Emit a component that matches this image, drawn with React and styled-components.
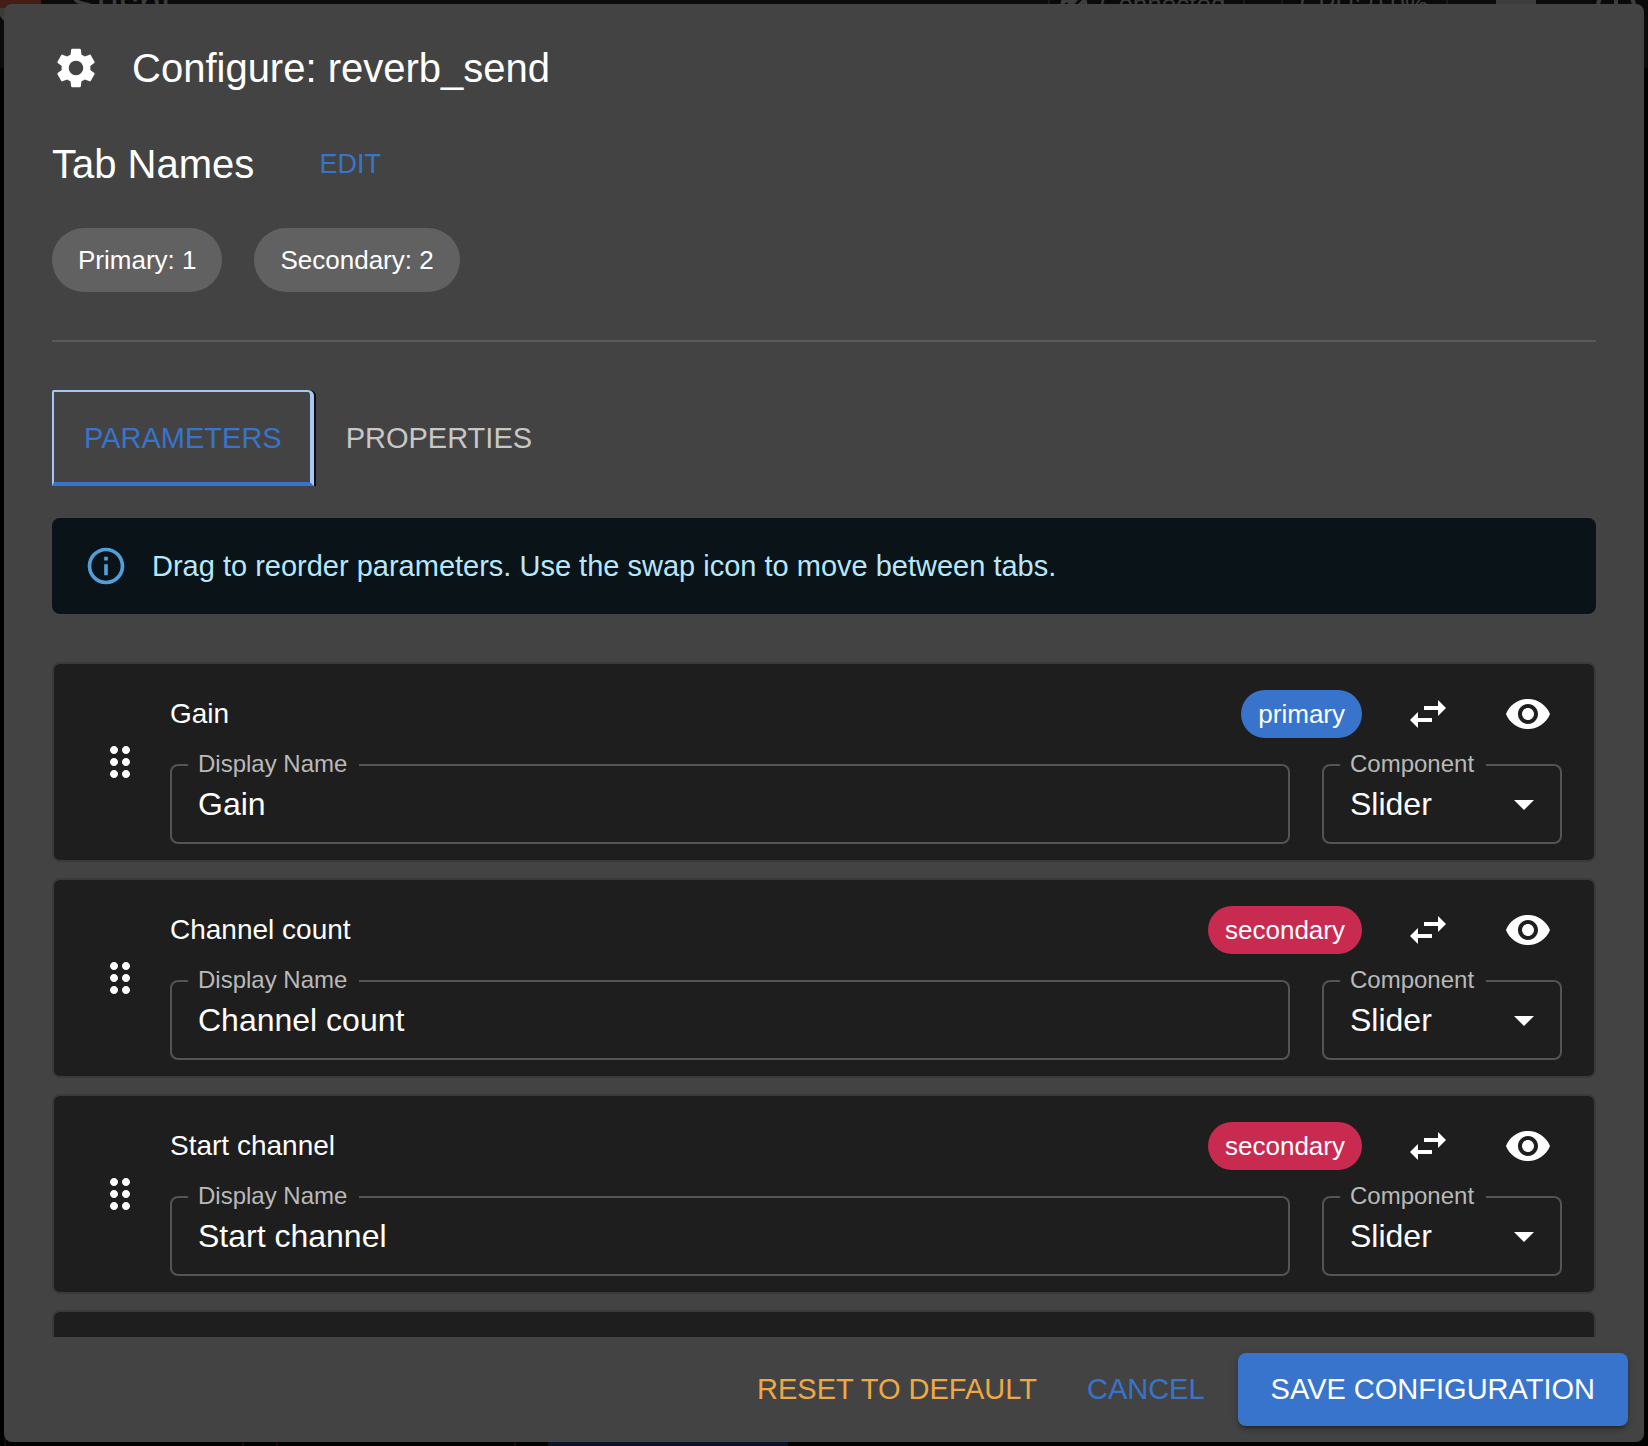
import React, { useId, useState } from "react";
import styled, { createGlobalStyle } from "styled-components";

const GlobalStyle = createGlobalStyle`
  *, *::before, *::after { box-sizing: border-box; }
  html, body, #root { height: 100%; }
  body {
    margin: 0;
    overflow: hidden;
    background: #000;
    color: #fff;
    font-family: "Liberation Sans", Helvetica, Arial, sans-serif;
  }
  button, input, select { font: inherit; color: inherit; }
`;

const Page = styled.div`
  position: relative;
  height: 100vh;
  overflow: hidden;
`;

const Backdrop = styled.div`
  position: absolute;
  inset: 0;
  display: flex;
  flex-direction: column;
  justify-content: space-between;
  color: #3d3d3d;
`;

const AppBar = styled.header`
  display: flex;
  align-items: center;
  gap: 36px;
  height: 128px;
  margin-top: -60px;
  background: #0a0a0a;
`;

const Brand = styled.span`
  flex: 1;
  display: flex;
  align-items: center;
  gap: 28px;
  font-size: 40px;
  line-height: 40px;
`;

const Logo = styled.svg`
  width: 42px;
  height: 40px;
`;

const Status = styled.span`
  display: flex;
  align-items: center;
  gap: 10px;
  height: 64px;
  padding: 0 18px 0 ${(p) => (p.$icon ? 8 : 16)}px;
  border: 2px solid #1b1b1b;
  border-radius: 32px;
  font-size: 26px;
`;

const BarIcon = styled.svg`
  width: 64px;
  height: 48px;
  fill: currentColor;
`;

const Tracks = styled.div`
  display: flex;
  height: 8px;
`;

const Track = styled.div`
  width: ${(p) => p.$width}px;
  background: ${(p) => p.$fill || "#000"};
  border-left: 2px solid ${(p) => p.$fill || "#1d0709"};
`;

const Overlay = styled.div`
  position: absolute;
  inset: 0;
  display: flex;
  padding: 4px;
`;

const Dialog = styled.section`
  flex: 1;
  min-width: 0;
  display: flex;
  flex-direction: column;
  border-radius: 8px;
  background: #434343;
`;

const DialogTitle = styled.h2`
  display: flex;
  align-items: center;
  gap: 32px;
  margin: 0;
  padding: 32px 48px;
  font-size: 40px;
  line-height: 64px;
  font-weight: 400;
`;

const Icon = styled.svg`
  display: block;
  flex: none;
  width: ${(p) => p.$size || 48}px;
  height: ${(p) => p.$size || 48}px;
  fill: currentColor;
`;

const Content = styled.div`
  flex: 1;
  min-height: 0;
  padding: 0 48px;
  overflow: hidden;
`;

const SectionHead = styled.div`
  display: flex;
  align-items: center;
  gap: 32px;
  height: 64px;
`;

const SectionTitle = styled.h3`
  margin: 0;
  font-size: 40px;
  line-height: 64px;
  font-weight: 400;
`;

const Button = styled.button`
  border: 0;
  border-radius: 8px;
  padding: 12px ${(p) => (p.$solid ? 33 : 17)}px;
  background: ${(p) => (p.$solid ? "#3874cb" : "transparent")};
  box-shadow: ${(p) =>
    p.$solid ? "0 6px 2px -4px rgba(0,0,0,.2), 0 4px 4px rgba(0,0,0,.14), 0 2px 10px rgba(0,0,0,.12)" : "none"};
  color: ${(p) => p.$color || "#fff"};
  font-size: 29px;
  line-height: 49px;
  text-transform: uppercase;
  white-space: nowrap;
  cursor: pointer;
`;

const SmallButton = styled(Button)`
  min-width: 128px;
  padding: 8px 10px;
  font-size: 27px;
  line-height: 44px;
`;

const ChipRow = styled.div`
  display: flex;
  gap: 32px;
  padding: 32px 0 48px;
  border-bottom: 2px solid #595959;
`;

const Chip = styled.span`
  display: inline-flex;
  align-items: center;
  height: ${(p) => (p.$tone ? 48 : 64)}px;
  padding: 0 ${(p) => (p.$tone ? 17 : 26)}px;
  border-radius: 32px;
  background: ${(p) => p.$tone || "#616161"};
  font-size: 26px;
  white-space: nowrap;
`;

const Tabs = styled.div`
  display: flex;
  margin: 48px 0 32px;
`;

const Tab = styled.button`
  height: 96px;
  padding: ${(p) => (p.$active ? "2px 28px 0 30px" : "0 32px")};
  border: 0 solid #a5c6f8;
  border-width: ${(p) => (p.$active ? "2px 4px 4px 2px" : "0")};
  border-bottom-color: #3874cb;
  border-radius: 2px 6px 0 0;
  background: transparent;
  box-shadow: ${(p) => (p.$active ? "2px 0 0 #0c0c0c" : "none")};
  color: ${(p) => (p.$active ? "#3874cb" : "#c7c7c7")};
  font-size: 29px;
  text-transform: uppercase;
  outline: none;
  cursor: pointer;
`;

const Alert = styled.div`
  display: flex;
  align-items: center;
  gap: 24px;
  min-height: 96px;
  margin-bottom: 48px;
  padding: 0 32px;
  border-radius: 8px;
  background: #0a1318;
  color: #b8e7fb;
  font-size: 29px;
  line-height: 40px;
  svg { color: #509fd9; }
`;

const List = styled.ul`
  display: flex;
  flex-direction: column;
  gap: 16px;
  margin: 0;
  padding: 0;
  list-style: none;
`;

const Card = styled.li`
  display: flex;
  align-items: center;
  gap: 16px;
  padding: 16px 32px;
  border: 2px solid #393939;
  border-radius: 8px;
  background: #1e1e1e;
`;

const CardBody = styled.div`
  flex: 1;
  min-width: 0;
  display: grid;
  gap: 16px;
`;

const CardRow = styled.div`
  display: flex;
  align-items: center;
  gap: 32px;
`;

const ParamName = styled.span`
  flex: 1;
  font-size: 28px;
`;

const IconButton = styled.button`
  flex: none;
  padding: 10px;
  border: 0;
  border-radius: 50%;
  background: transparent;
  cursor: pointer;
`;

const Field = styled.div`
  position: relative;
  flex: ${(p) => (p.$width ? "none" : 1)};
  width: ${(p) => (p.$width ? `${p.$width}px` : "auto")};
  min-width: 0;
`;

const FieldLabel = styled.label`
  position: absolute;
  top: -14px;
  left: 18px;
  padding: 0 12px 0 10px;
  background: #1e1e1e;
  color: #b9b9b9;
  font-size: 24px;
  line-height: 28px;
`;

const controlStyle = `
  display: block;
  width: 100%;
  height: 80px;
  padding: 0 26px;
  border: 2px solid #545454;
  border-radius: 8px;
  background: transparent;
  font-size: 32px;
  outline: none;
`;

const TextInput = styled.input`${controlStyle}`;

const Select = styled.select`
  ${controlStyle}
  appearance: none;
  option { background: #1e1e1e; }
`;

const SelectArrow = styled(Icon)`
  position: absolute;
  top: 16px;
  right: 14px;
  pointer-events: none;
`;

const Actions = styled.footer`
  display: flex;
  justify-content: flex-end;
  gap: 16px;
  padding: 16px;
`;

const paths = {
  gear: "M19.14 12.94c.04-.3.06-.61.06-.94 0-.32-.02-.64-.07-.94l2.03-1.58c.18-.14.23-.41.12-.61l-1.92-3.32c-.12-.22-.37-.29-.59-.22l-2.39.96c-.5-.38-1.03-.7-1.62-.94l-.36-2.54c-.04-.24-.24-.41-.48-.41h-3.84c-.24 0-.43.17-.47.41l-.36 2.54c-.59.24-1.13.57-1.62.94l-2.39-.96c-.22-.08-.47 0-.59.22L2.74 8.87c-.12.21-.08.47.12.61l2.03 1.58c-.05.3-.09.63-.09.94s.02.64.07.94l-2.03 1.58c-.18.14-.23.41-.12.61l1.92 3.32c.12.22.37.29.59.22l2.39-.96c.5.38 1.03.7 1.62.94l.36 2.54c.05.24.24.41.48.41h3.84c.24 0 .44-.17.47-.41l.36-2.54c.59-.24 1.13-.56 1.62-.94l2.39.96c.22.08.47 0 .59-.22l1.92-3.32c.12-.22.07-.47-.12-.61l-2.01-1.58zM12 15.6c-1.98 0-3.6-1.62-3.6-3.6s1.62-3.6 3.6-3.6 3.6 1.62 3.6 3.6-1.62 3.6-3.6 3.6z",
  info: "M11 7h2v2h-2zm0 4h2v6h-2zm1-9C6.48 2 2 6.48 2 12s4.48 10 10 10 10-4.48 10-10S17.52 2 12 2m0 18c-4.41 0-8-3.59-8-8s3.59-8 8-8 8 3.59 8 8-3.59 8-8 8",
  drag: "M11 18c0 1.1-.9 2-2 2s-2-.9-2-2 .9-2 2-2 2 .9 2 2m-2-8c-1.1 0-2 .9-2 2s.9 2 2 2 2-.9 2-2-.9-2-2-2m0-6c-1.1 0-2 .9-2 2s.9 2 2 2 2-.9 2-2-.9-2-2-2m6 4c1.1 0 2-.9 2-2s-.9-2-2-2-2 .9-2 2 .9 2 2 2m0 2c-1.1 0-2 .9-2 2s.9 2 2 2 2-.9 2-2-.9-2-2-2m0 6c-1.1 0-2 .9-2 2s.9 2 2 2 2-.9 2-2-.9-2-2-2",
  swap: "M6.99 11 3 15l3.99 4v-3H14v-2H6.99zM21 9l-3.99-4v3H10v2h7.01v3z",
  eye: "M12 4.5C7 4.5 2.73 7.61 1 12c1.73 4.39 6 7.5 11 7.5s9.27-3.11 11-7.5c-1.73-4.39-6-7.5-11-7.5M12 17c-2.76 0-5-2.24-5-5s2.24-5 5-5 5 2.24 5 5-2.24 5-5 5m0-8c-1.66 0-3 1.34-3 3s1.34 3 3 3 3-1.34 3-3-1.34-3-3-3",
  arrow: "m7 10 5 5 5-5z",
  check: "M12 2C6.48 2 2 6.48 2 12s4.48 10 10 10 10-4.48 10-10S17.52 2 12 2m-2 15-5-5 1.41-1.41L10 14.17l7.59-7.59L19 8z",
};

function Glyph({ name, size }) {
  return (
    <Icon viewBox="0 0 24 24" $size={size} aria-hidden="true">
      <path d={paths[name]} />
    </Icon>
  );
}

const toneOf = { primary: "#3874cb", secondary: "#c92a50" };

function ParameterCard({ name, tab }) {
  const id = useId();
  const [label, setLabel] = useState(name);
  return (
    <Card>
      <IconButton aria-label={`Reorder ${name}`}>
        <Glyph name="drag" />
      </IconButton>
      <CardBody>
        <CardRow>
          <ParamName>{name}</ParamName>
          <Chip $tone={toneOf[tab]}>{tab}</Chip>
          <IconButton aria-label="Move to other tab">
            <Glyph name="swap" />
          </IconButton>
          <IconButton aria-label="Toggle visibility">
            <Glyph name="eye" />
          </IconButton>
        </CardRow>
        <CardRow>
          <Field>
            <TextInput id={`${id}-name`} value={label} onChange={(e) => setLabel(e.target.value)} />
            <FieldLabel htmlFor={`${id}-name`}>Display Name</FieldLabel>
          </Field>
          <Field $width={240}>
            <Select id={`${id}-component`} defaultValue="Slider">
              <option>Slider</option>
            </Select>
            <FieldLabel htmlFor={`${id}-component`}>Component</FieldLabel>
            <SelectArrow viewBox="0 0 24 24" aria-hidden="true">
              <path d={paths.arrow} />
            </SelectArrow>
          </Field>
        </CardRow>
      </CardBody>
    </Card>
  );
}

const parameters = [
  { name: "Gain", tab: "primary" },
  { name: "Channel count", tab: "secondary" },
  { name: "Start channel", tab: "secondary" },
];

export default function App() {
  return (
    <Page>
      <GlobalStyle />
      <Backdrop aria-hidden="true">
        <AppBar>
          <Brand>
            <Logo viewBox="0 0 42 40">
              <path d="M0 0h36q6 12 5 24H0z" fill="#461d14" />
              <path d="M0 24h6v14Q2 36 0 32z" fill="#3b3b3b" />
            </Logo>
            Sushi
          </Brand>
          <Status $icon>
            <Glyph name="check" size={32} />
            Connected
          </Status>
          <Status>CPU: 0.0%</Status>
          <BarIcon viewBox="0 0 64 48">
            <path d="M16 8h32l4 12v20H12V20zm14 16v8h4v-8z" />
          </BarIcon>
          <BarIcon viewBox="0 0 64 48">
            <path d="M30 6h4v24h-4zM18 12l3 3a16 16 0 1 0 22 0l3-3a20 20 0 1 1-28 0" />
          </BarIcon>
        </AppBar>
        <Tracks>
          <Track $width={4} $fill="#000" />
          <Track $width={238} />
          <Track $width={34} />
          <Track $width={238} />
          <Track $width={34} />
          <Track $width={240} $fill="#0a1226" />
        </Tracks>
      </Backdrop>
      <Overlay>
        <Dialog role="dialog" aria-labelledby="dialog-title">
          <DialogTitle id="dialog-title">
            <Glyph name="gear" />
            Configure: reverb_send
          </DialogTitle>
          <Content>
            <SectionHead>
              <SectionTitle>Tab Names</SectionTitle>
              <SmallButton $color="#3874cb">Edit</SmallButton>
            </SectionHead>
            <ChipRow>
              <Chip>Primary: 1</Chip>
              <Chip>Secondary: 2</Chip>
            </ChipRow>
            <Tabs role="tablist">
              <Tab role="tab" aria-selected="true" $active>
                Parameters
              </Tab>
              <Tab role="tab" aria-selected="false">
                Properties
              </Tab>
            </Tabs>
            <Alert>
              <Glyph name="info" size={44} />
              Drag to reorder parameters. Use the swap icon to move between tabs.
            </Alert>
            <List>
              {parameters.map((p) => (
                <ParameterCard key={p.name} {...p} />
              ))}
              <Card>
                <CardBody>
                  <CardRow />
                </CardBody>
              </Card>
            </List>
          </Content>
          <Actions>
            <Button $color="#efa843">Reset to Default</Button>
            <Button $color="#3874cb">Cancel</Button>
            <Button $solid>Save Configuration</Button>
          </Actions>
        </Dialog>
      </Overlay>
    </Page>
  );
}
